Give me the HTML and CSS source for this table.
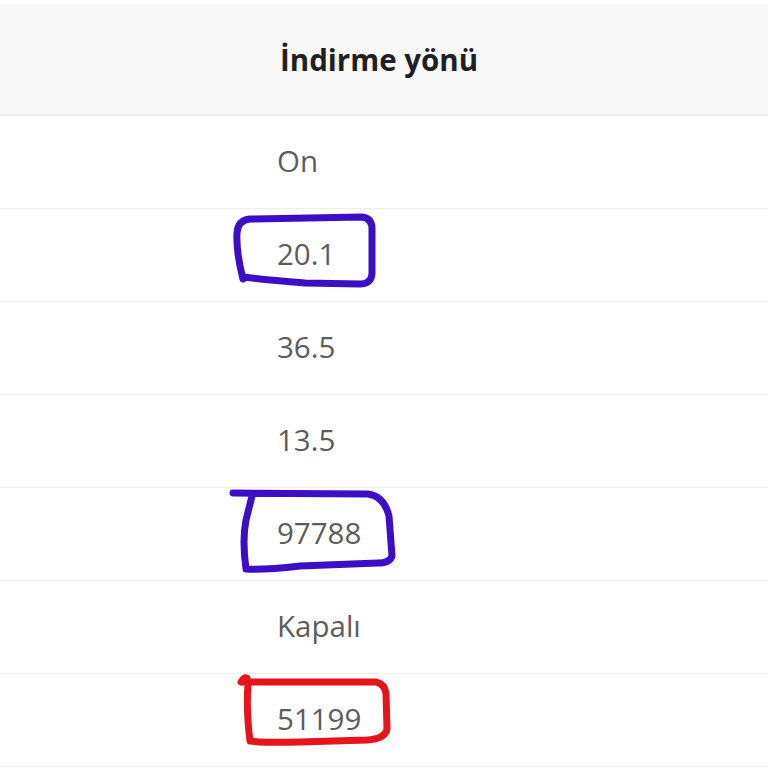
FILE: index.html
```html
<!DOCTYPE html>
<html lang="tr">
<head>
<meta charset="utf-8">
<title>İndirme yönü</title>
<link rel="stylesheet" href="styles.css">
</head>
<body>
<div class="page">
  <div class="table">
    <div class="head"><span class="head-label">İndirme yönü</span></div>
    <div class="row"><span class="cell">On</span></div>
    <div class="row"><span class="cell">20.1</span></div>
    <div class="row"><span class="cell">36.5</span></div>
    <div class="row"><span class="cell">13.5</span></div>
    <div class="row"><span class="cell">97788</span></div>
    <div class="row"><span class="cell">Kapalı</span></div>
    <div class="row"><span class="cell">51199</span></div>
  </div>
  <svg class="marks" width="768" height="768" viewBox="0 0 768 768" xmlns="http://www.w3.org/2000/svg">
    <path class="mark blue" d="M243 279 Q236 252 237 233 Q238 220 250 219 L362 217 Q372 218 372 229 L372 274 Q371 284 360 284 L305 283 Q265 280 244 277"/>
    <path class="mark blue" d="M233 493 L368 494 Q384 496 389 516 L392 556 Q390 563 378 563 L300 566 Q265 570 246 569 Q242 540 246 520 L252 496"/>
    <path class="mark red" d="M241 682 Q244 677 247 678 L248 684 M244 682 L376 682 Q385 684 386 694 L387 729 Q385 739 367 740 L300 742 Q265 743 250 741 Q246 710 248 684"/>
  </svg>
</div>
</body>
</html>
```
FILE: styles.css
```css
html, body {
  margin: 0;
  padding: 0;
  background: #ffffff;
}
.page {
  position: relative;
  width: 768px;
  height: 768px;
  overflow: hidden;
  font-family: "Open Sans", "Noto Sans", sans-serif;
}
.table {
  display: flex;
  flex-direction: column;
  padding-top: 4px;
}
.head {
  height: 110px;
  background: #f9f9f9;
  border-bottom: 2px solid #ececec;
  display: flex;
  align-items: center;
  padding-left: 280px;
}
.head-label {
  font-size: 29.5px;
  font-weight: 700;
  color: #1f1f24;
  letter-spacing: 0;
}
.row {
  box-sizing: border-box;
  height: 93px;
  padding-bottom: 3px;
  border-bottom: 1px solid #eeeeee;
  display: flex;
  align-items: center;
  padding-left: 277px;
}
.cell {
  font-size: 29.5px;
  color: #5c5c60;
}
.marks {
  position: absolute;
  left: 0;
  top: 0;
  pointer-events: none;
}
.mark {
  fill: none;
  stroke-width: 7;
  stroke-linecap: round;
  stroke-linejoin: round;
}
.blue { stroke: #3c0fc6; }
.red { stroke: #e5151b; }
```
